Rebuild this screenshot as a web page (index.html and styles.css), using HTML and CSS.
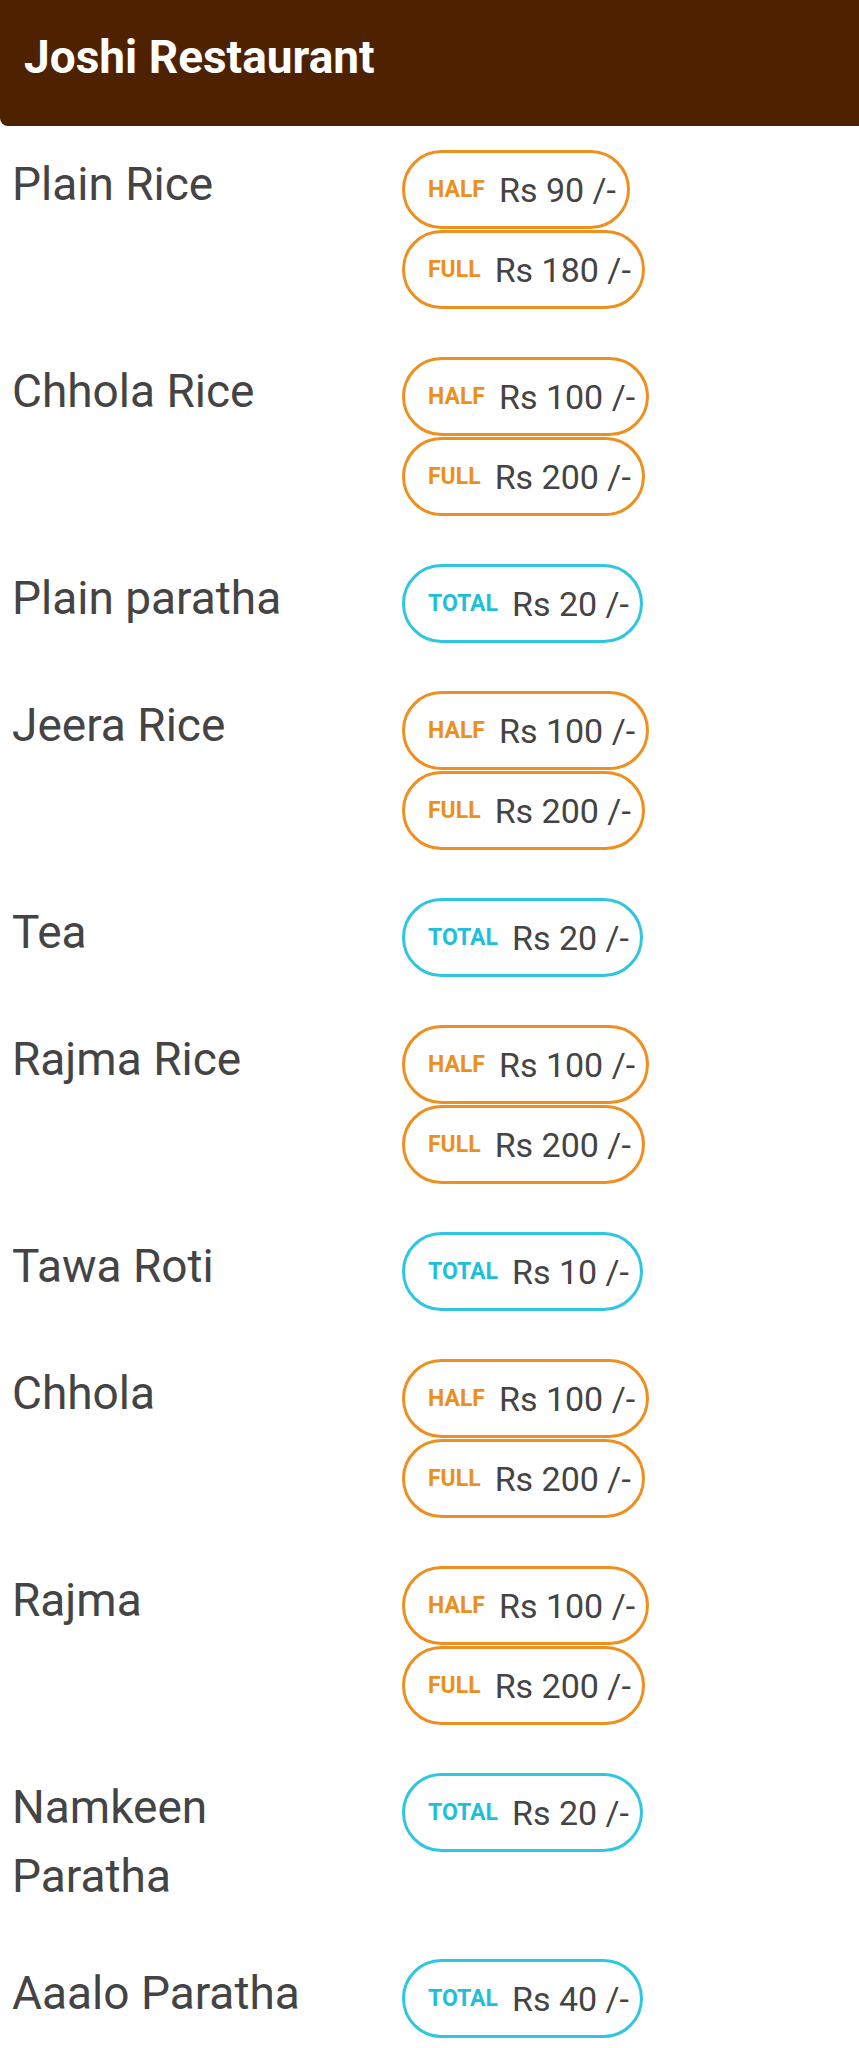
FILE: index.html
```html
<!DOCTYPE html>
<html>
  <head>
      <meta charset="utf-8">
      <title>Joshi Restaurant</title>
      <link rel="stylesheet" href="styles.css">
  </head>
  <body>
      <div id="bar">
          <h1>Joshi Restaurant</h1>
      </div>
      <div id="menu">
          <div class="row">
            <div class="name">Plain Rice</div>
            <div class="prices">
              <div class="chip half"><span class="tag">Half</span><span class="price">Rs 90 /-</span></div>
              <div class="chip half"><span class="tag">Full</span><span class="price">Rs 180 /-</span></div>
            </div>
          </div>
          <div class="row">
            <div class="name">Chhola Rice</div>
            <div class="prices">
              <div class="chip half"><span class="tag">Half</span><span class="price">Rs 100 /-</span></div>
              <div class="chip half"><span class="tag">Full</span><span class="price">Rs 200 /-</span></div>
            </div>
          </div>
          <div class="row">
            <div class="name">Plain paratha</div>
            <div class="prices">
              <div class="chip total"><span class="tag">Total</span><span class="price">Rs 20 /-</span></div>
            </div>
          </div>
          <div class="row">
            <div class="name">Jeera Rice</div>
            <div class="prices">
              <div class="chip half"><span class="tag">Half</span><span class="price">Rs 100 /-</span></div>
              <div class="chip half"><span class="tag">Full</span><span class="price">Rs 200 /-</span></div>
            </div>
          </div>
          <div class="row">
            <div class="name">Tea</div>
            <div class="prices">
              <div class="chip total"><span class="tag">Total</span><span class="price">Rs 20 /-</span></div>
            </div>
          </div>
          <div class="row">
            <div class="name">Rajma Rice</div>
            <div class="prices">
              <div class="chip half"><span class="tag">Half</span><span class="price">Rs 100 /-</span></div>
              <div class="chip half"><span class="tag">Full</span><span class="price">Rs 200 /-</span></div>
            </div>
          </div>
          <div class="row">
            <div class="name">Tawa Roti</div>
            <div class="prices">
              <div class="chip total"><span class="tag">Total</span><span class="price">Rs 10 /-</span></div>
            </div>
          </div>
          <div class="row">
            <div class="name">Chhola</div>
            <div class="prices">
              <div class="chip half"><span class="tag">Half</span><span class="price">Rs 100 /-</span></div>
              <div class="chip half"><span class="tag">Full</span><span class="price">Rs 200 /-</span></div>
            </div>
          </div>
          <div class="row">
            <div class="name">Rajma</div>
            <div class="prices">
              <div class="chip half"><span class="tag">Half</span><span class="price">Rs 100 /-</span></div>
              <div class="chip half"><span class="tag">Full</span><span class="price">Rs 200 /-</span></div>
            </div>
          </div>
          <div class="row">
            <div class="name">Namkeen Paratha</div>
            <div class="prices">
              <div class="chip total"><span class="tag">Total</span><span class="price">Rs 20 /-</span></div>
            </div>
          </div>
          <div class="row">
            <div class="name">Aaalo Paratha</div>
            <div class="prices">
              <div class="chip total"><span class="tag">Total</span><span class="price">Rs 40 /-</span></div>
            </div>
          </div>
      </div>
  </body>
</html>
```
FILE: styles.css
```css
*{
  margin:0;
  padding: 0;
}
body{
  background: #fff;
  font-family: Roboto, "Liberation Sans", sans-serif;
  color: #444;
}
#bar{
  height: 126px;
  box-sizing: border-box;
  padding: 30px 0 0 24px;
  background-color: #4e2200;
  border-bottom-left-radius: 8px;
}
#bar h1{
  font-size: 46px;
  line-height: 54px;
  font-weight: 700;
  color: #fff;
}
#menu{
  padding: 24px 0 0 12px;
}
.row{
  display: flex;
  align-items: flex-start;
  padding-bottom: 48px;
}
.name{
  width: 300px;
  margin-right: 90px;
  font-size: 46px;
  line-height: 69px;
}
.prices{
  display: flex;
  flex-direction: column;
  align-items: flex-start;
  gap: 1px;
}
.chip{
  height: 79px;
  box-sizing: border-box;
  display: flex;
  align-items: center;
  padding: 0 11px 0 23px;
  border: 3px solid #ee9020;
  border-radius: 40px;
}
.tag{
  font-size: 23px;
  font-weight: 700;
  text-transform: uppercase;
  margin-right: 14px;
  color: #ec8f1c;
}
.price{
  font-size: 34px;
}
.total{
  border-color: #2ec6e0;
}
.total .tag{
  color: #1fbfdb;
}
```
